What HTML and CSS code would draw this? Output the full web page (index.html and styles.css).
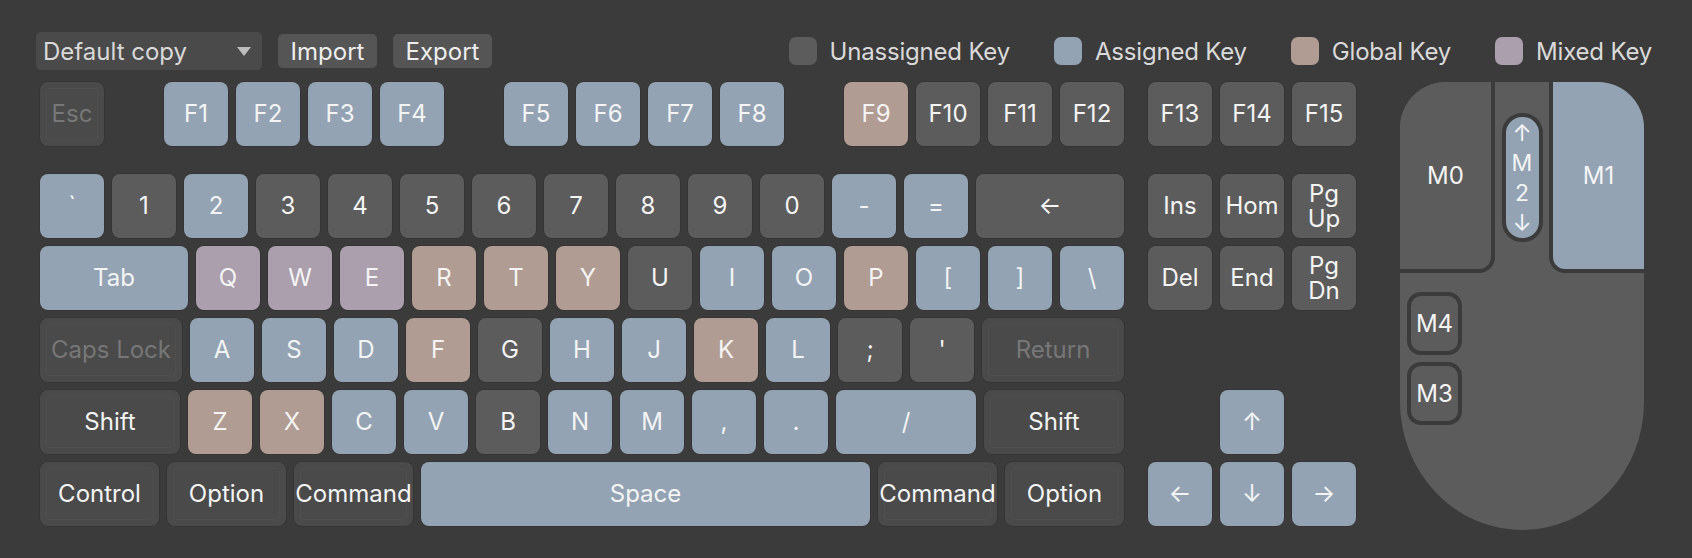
FILE: index.html
```html
<!DOCTYPE html>
<html lang="en">
<head>
    <meta charset="UTF-8">
    <title>Key Bindings</title>
    <link rel="stylesheet" href="styles.css">
</head>
<body>
    <div class="toolbar">
        <div class="tools">
            <div class="select">Default copy <span class="caret"></span></div>
            <button class="btn">Import</button>
            <button class="btn">Export</button>
        </div>
        <div class="legend">
            <span class="legend-item"><i class="swatch un"></i>Unassigned Key</span>
            <span class="legend-item"><i class="swatch as"></i>Assigned Key</span>
            <span class="legend-item"><i class="swatch gl"></i>Global Key</span>
            <span class="legend-item"><i class="swatch mx"></i>Mixed Key</span>
        </div>
    </div>

    <div class="board">
        <div class="keys">
            <div class="row fkeys">
                <div class="key off">Esc</div>
                <div class="key as group">F1</div>
                <div class="key as">F2</div>
                <div class="key as">F3</div>
                <div class="key as">F4</div>
                <div class="key as group">F5</div>
                <div class="key as">F6</div>
                <div class="key as">F7</div>
                <div class="key as">F8</div>
                <div class="key gl group">F9</div>
                <div class="key un">F10</div>
                <div class="key un">F11</div>
                <div class="key un">F12</div>
            </div>
            <div class="row">
                <div class="key as">`</div>
                <div class="key un">1</div>
                <div class="key as">2</div>
                <div class="key un">3</div>
                <div class="key un">4</div>
                <div class="key un">5</div>
                <div class="key un">6</div>
                <div class="key un">7</div>
                <div class="key un">8</div>
                <div class="key un">9</div>
                <div class="key un">0</div>
                <div class="key as">-</div>
                <div class="key as">=</div>
                <div class="key un w-tab">←</div>
            </div>
            <div class="row">
                <div class="key as w-tab">Tab</div>
                <div class="key mx">Q</div>
                <div class="key mx">W</div>
                <div class="key mx">E</div>
                <div class="key gl">R</div>
                <div class="key gl">T</div>
                <div class="key gl">Y</div>
                <div class="key un">U</div>
                <div class="key as">I</div>
                <div class="key as">O</div>
                <div class="key gl">P</div>
                <div class="key as">[</div>
                <div class="key as">]</div>
                <div class="key as">\</div>
            </div>
            <div class="row">
                <div class="key off w-caps">Caps Lock</div>
                <div class="key as">A</div>
                <div class="key as">S</div>
                <div class="key as">D</div>
                <div class="key gl">F</div>
                <div class="key un">G</div>
                <div class="key as">H</div>
                <div class="key as">J</div>
                <div class="key gl">K</div>
                <div class="key as">L</div>
                <div class="key un">;</div>
                <div class="key un">'</div>
                <div class="key off w-caps">Return</div>
            </div>
            <div class="row">
                <div class="key mod w-shift">Shift</div>
                <div class="key gl">Z</div>
                <div class="key gl">X</div>
                <div class="key as">C</div>
                <div class="key as">V</div>
                <div class="key un">B</div>
                <div class="key as">N</div>
                <div class="key as">M</div>
                <div class="key as">,</div>
                <div class="key as">.</div>
                <div class="key as w-shift">/</div>
                <div class="key mod w-shift">Shift</div>
            </div>
            <div class="row">
                <div class="key mod w-mod">Control</div>
                <div class="key mod w-mod">Option</div>
                <div class="key mod w-mod">Command</div>
                <div class="key as w-space">Space</div>
                <div class="key mod w-mod">Command</div>
                <div class="key mod w-mod">Option</div>
            </div>
        </div>

        <div class="keys nav">
            <div class="row fkeys">
                <div class="key un">F13</div>
                <div class="key un">F14</div>
                <div class="key un">F15</div>
            </div>
            <div class="row">
                <div class="key un">Ins</div>
                <div class="key un">Hom</div>
                <div class="key un two">Pg<br>Up</div>
            </div>
            <div class="row">
                <div class="key un">Del</div>
                <div class="key un">End</div>
                <div class="key un two">Pg<br>Dn</div>
            </div>
            <div class="row empty"></div>
            <div class="row">
                <div class="key as up">↑</div>
            </div>
            <div class="row">
                <div class="key as">←</div>
                <div class="key as">↓</div>
                <div class="key as">→</div>
            </div>
        </div>

        <div class="mouse">
            <div class="mouse-top">
                <div class="mbtn m0">M0</div>
                <div class="strip">
                    <div class="wheel">
                        <span>↑</span>
                        <span>M</span>
                        <span>2</span>
                        <span>↓</span>
                    </div>
                </div>
                <div class="mbtn m1">M1</div>
            </div>
            <div class="side">
                <div class="sbtn">M4</div>
                <div class="sbtn">M3</div>
            </div>
        </div>
    </div>
</body>
</html>
```

FILE: styles.css
```css
body {
    margin: 0;
    width: 1692px;
    height: 558px;
    background-color: #3b3b3b;
    font-family: Inter, "Noto Sans", sans-serif;
    font-size: 24px;
    color: #f4f4f4;
    overflow: hidden;
}

/* top bar */

.toolbar {
    display: flex;
    justify-content: space-between;
    align-items: center;
    width: 1616px;
    height: 38px;
    margin: 32px 0 0 36px;
}

.tools {
    display: flex;
    align-items: center;
    gap: 16px;
}

.select {
    display: flex;
    align-items: center;
    justify-content: space-between;
    box-sizing: border-box;
    width: 226px;
    height: 38px;
    padding: 0 11px 0 7px;
    background-color: #4a4a4a;
    border-radius: 5px;
    color: #d9d9d9;
}

.caret {
    width: 0;
    height: 0;
    border-left: 7px solid transparent;
    border-right: 7px solid transparent;
    border-top: 9px solid #bdbdbd;
}

.btn {
    width: 99px;
    height: 34px;
    padding: 0;
    border: none;
    border-radius: 5px;
    background-color: #555555;
    color: #eeeeee;
    font-family: inherit;
    font-size: 24px;
}

.legend {
    display: flex;
    align-items: center;
    gap: 44px;
    color: #dadada;
    letter-spacing: -0.2px;
}

.legend-item {
    display: flex;
    align-items: center;
}

.swatch {
    width: 28px;
    height: 28px;
    margin-right: 13px;
    border-radius: 7px;
}

/* keyboard */

.board {
    display: flex;
    align-items: flex-start;
    margin: 12px 0 0 40px;
}

.keys {
    display: flex;
    flex-direction: column;
    gap: 8px;
}

.row {
    display: flex;
    gap: 8px;
}

.row.fkeys {
    margin-bottom: 20px;
}

.row.empty {
    height: 64px;
}

.nav {
    margin-left: 24px;
}

.key {
    position: relative;
    display: flex;
    align-items: center;
    justify-content: center;
    flex: none;
    width: 64px;
    height: 64px;
    border-radius: 8px;
    box-shadow: 0 0 0 1px rgba(0, 0, 0, 0.1);
    line-height: 1;
    white-space: nowrap;
}

.key.group {
    margin-left: 52px;
}

.key.up {
    margin-left: 72px;
}

.key.two {
    line-height: 25px;
    text-align: center;
}

.un, .swatch.un { background-color: #5c5c5c; }
.as, .swatch.as { background-color: #93a3b3; }
.gl, .swatch.gl { background-color: #b09c93; }
.mx, .swatch.mx { background-color: #ab9fad; }

.off, .mod {
    background-color: #4a4a4a;
}

.off {
    color: #777777;
}

.off::after, .mod::after {
    content: "";
    position: absolute;
    inset: 6px;
    border: 1px dotted rgba(255, 255, 255, 0.05);
    border-radius: 4px;
}

.w-tab { width: 148px; }
.w-caps { width: 142px; }
.w-shift { width: 140px; }
.w-mod { width: 119px; }
.w-space { width: 449px; }

/* mouse */

.mouse {
    display: flex;
    flex-direction: column;
    width: 244px;
    height: 448px;
    margin-left: 44px;
    background-color: #5c5c5c;
    border-radius: 46px 46px 122px 122px / 46px 46px 128px 128px;
    overflow: hidden;
}

.mouse-top {
    display: flex;
    height: 191px;
}

.mbtn {
    display: flex;
    align-items: center;
    justify-content: center;
    box-sizing: border-box;
    width: 95px;
    height: 191px;
    border-bottom: 4px solid #3b3b3b;
}

.m0 {
    background-color: #5c5c5c;
    border-right: 4px solid #3b3b3b;
    border-bottom-right-radius: 16px;
}

.m1 {
    background-color: #93a3b3;
    border-left: 4px solid #3b3b3b;
    border-bottom-left-radius: 16px;
}

.strip {
    display: flex;
    align-items: center;
    justify-content: center;
    width: 54px;
}

.wheel {
    display: flex;
    flex-direction: column;
    align-items: center;
    justify-content: center;
    box-sizing: border-box;
    width: 41px;
    height: 129px;
    border: 4px solid #3b3b3b;
    border-radius: 20px;
    background-color: #93a3b3;
    font-size: 23px;
    line-height: 30px;
}

.side {
    display: flex;
    flex-direction: column;
    gap: 7px;
    margin: 19px 0 0 7px;
}

.sbtn {
    display: flex;
    align-items: center;
    justify-content: center;
    box-sizing: border-box;
    width: 55px;
    height: 63px;
    border: 4px solid #3b3b3b;
    border-radius: 14px;
}
```
